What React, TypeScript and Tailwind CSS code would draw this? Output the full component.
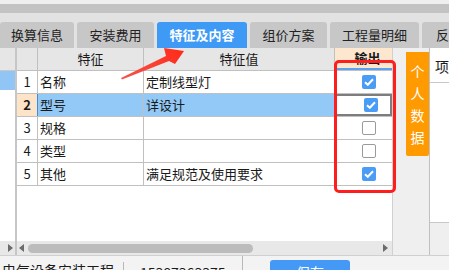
import React from "react";

type Row = { n: number; key: string; value: string; checked: boolean; selected?: boolean };

const rows: Row[] = [
  { n: 1, key: "名称", value: "定制线型灯", checked: true },
  { n: 2, key: "型号", value: "详设计", checked: true, selected: true },
  { n: 3, key: "规格", value: "", checked: false },
  { n: 4, key: "类型", value: "", checked: false },
  { n: 5, key: "其他", value: "满足规范及使用要求", checked: true },
];

const tabs = [
  { label: "换算信息", w: "w-[74px]" },
  { label: "安装费用", w: "w-[77px]" },
  { label: "特征及内容", w: "w-[90px]", active: true },
  { label: "组价方案", w: "w-[77px]" },
  { label: "工程量明细", w: "w-[89px]" },
  { label: "反查", w: "w-[60px]" },
];

const CheckBox = ({ checked }: { checked: boolean }) =>
  checked ? (
    <div className="w-[14px] h-[14px] rounded-[2px] bg-[#4a9cf5] flex items-center justify-center">
      <svg width="10" height="8" viewBox="0 0 10 8">
        <path d="M1 4.2 L3.8 6.8 L9 1.2" fill="none" stroke="white" strokeWidth="2" />
      </svg>
    </div>
  ) : (
    <div className="w-[14px] h-[14px] rounded-[2px] border border-[#9a9a9a] bg-white" />
  );

const ScrollArrow = ({ dir }: { dir: "left" | "right" }) => (
  <svg width="5" height="8" viewBox="0 0 5 8">
    {dir === "right" ? <path d="M0 0 L5 4 L0 8 Z" fill="#6b6b6b" /> : <path d="M5 0 L0 4 L5 8 Z" fill="#6b6b6b" />}
  </svg>
);

export default function App() {
  return (
    <div
      className="relative w-[449px] h-[270px] overflow-hidden bg-white text-[13px] text-[#1a1a1a]"
      style={{ fontFamily: '"Noto Sans CJK SC", "Liberation Sans", sans-serif' }}
    >
      {/* top bands */}
      <div className="h-[4px] bg-[#efefef]" />
      <div className="h-[9px] bg-[#c3c3c3]" />
      <div className="h-[35px] bg-[#e2e2e2] flex items-end gap-[3px]">
        {tabs.map((t) => (
          <div
            key={t.label}
            className={`${t.w} shrink-0 h-[26px] rounded-t-[3px] flex items-center ${
              t.active ? "bg-[#3f9af6] text-white font-bold" : "bg-[#c7c7c7] text-[#222]"
            } ${t.label === "反查" ? "justify-start pl-[14px]" : "justify-center"}`}
          >
            {t.label}
          </div>
        ))}
      </div>

      {/* main */}
      <div className="flex h-[207px]">
        {/* left panel */}
        <div className="w-[19px] flex flex-col">
          <div className="h-[23px] bg-[#e6e6e6] border-b border-[#c8c8c8]" />
          <div className="h-[19px] bg-[#90c5f5]" />
          <div className="flex-1" />
          <div className="h-[14px] bg-[#e8e8e8] flex items-center justify-end pr-[2px]">
            <ScrollArrow dir="right" />
          </div>
        </div>
        <div className="w-[3px] bg-[#c6c6c6]" />

        {/* grid */}
        <div className="w-[375px] flex flex-col">
          <div className="h-[23px] flex bg-[#e6e6e6] border-b border-[#c0c0c0]">
            <div className="w-[21px] border-r border-[#c0c0c0]" />
            <div className="w-[106px] border-r border-[#c0c0c0] flex items-center justify-center">特征</div>
            <div className="w-[191px] border-r border-[#c0c0c0] flex items-center justify-center">特征值</div>
            <div className="w-[57px] bg-[#fde7cf] flex items-center justify-center font-bold pl-[8px] border-b-2 border-[#5aa2f2]">
              输出
            </div>
          </div>
          {rows.map((r) => (
            <div key={r.n} className="h-[23px] flex border-b border-[#c0c0c0]">
              <div
                className={`w-[21px] border-r flex items-center justify-center ${
                  r.selected ? "bg-[#fde4c8] font-bold border-[#3b8de0]" : "border-[#c0c0c0]"
                }`}
              >
                {r.n}
              </div>
              <div className={`w-[106px] border-r border-[#c0c0c0] flex items-center pl-[2px] ${r.selected ? "bg-[#93c9f7]" : ""}`}>
                {r.key}
              </div>
              <div className={`w-[191px] border-r border-[#c0c0c0] flex items-center pl-[2px] ${r.selected ? "bg-[#93c9f7]" : ""}`}>
                {r.value}
              </div>
              <div
                className={`w-[57px] flex items-center pl-[27px] ${r.selected ? "border-2 border-[#7d7d7d] pl-[25px]" : ""}`}
              >
                <CheckBox checked={r.checked} />
              </div>
            </div>
          ))}
          <div className="flex-1" />
          <div className="h-[14px] bg-[#e8e8e8] flex items-center pl-[2px] pr-[4px]">
            <ScrollArrow dir="left" />
            <div className="ml-[4px] w-[225px] h-[9px] rounded-full bg-[#bcbcbc]" />
            <div className="flex-1" />
            <ScrollArrow dir="right" />
          </div>
        </div>

        {/* side strip */}
        <div className="w-[38px] bg-[#efefef] border-l border-[#d0d0d0] pl-[13px] pt-[4px]">
          <div className="w-[23px] h-[104px] bg-[#ff9a00] rounded-b-[2px] flex flex-col items-center justify-center text-white text-[14px] leading-[22px]">
            <span>个</span>
            <span>人</span>
            <span>数</span>
            <span>据</span>
          </div>
        </div>

        {/* right panel */}
        <div className="flex-1 border-l border-[#c0c0c0] flex flex-col">
          <div className="h-[35px] border-b border-[#c8c8c8] pl-[5px] pt-[8px] text-[14px]">项</div>
          <div className="h-[140px] bg-white border-b border-[#c8c8c8]" />
          <div className="flex-1 bg-[#efefef]" />
        </div>
      </div>

      {/* status bar */}
      <div className="h-[15px] border-t border-[#d0d0d0] bg-[#f3f3f3] flex overflow-hidden text-[14px] leading-[16px]">
        <div className="w-[124px] pl-[2px] pt-[6px] border-r border-[#b8b8b8] mt-[6px] -mb-[6px]">
          <div className="-mt-[6px]">电气设备安装工程</div>
        </div>
        <div className="w-[119px] pl-[16px] pt-[8px] border-r border-[#b8b8b8]">15387363375</div>
        <div className="pl-[27px] pt-[4px]">
          <div className="w-[80px] h-[20px] rounded-t-[3px] bg-[#4499f6] text-white text-center pt-[4px]">保存</div>
        </div>
      </div>

      {/* annotation: red box */}
      <div className="absolute left-[334px] top-[60px] w-[62px] h-[133px] border-[3px] border-[#ff1e1e] rounded-[5px]" />

      {/* annotation: arrow */}
      <svg className="absolute left-0 top-0" width="449" height="270" viewBox="0 0 449 270">
        <defs>
          <linearGradient id="ag" x1="122" y1="78" x2="184" y2="51" gradientUnits="userSpaceOnUse">
            <stop offset="0" stopColor="#f5554a" />
            <stop offset="1" stopColor="#ff2a1a" />
          </linearGradient>
        </defs>
        <polygon
          points="121,78 166,56 164,48 184,51 175,64 169,61 122,79.5"
          fill="url(#ag)"
        />
      </svg>
    </div>
  );
}
